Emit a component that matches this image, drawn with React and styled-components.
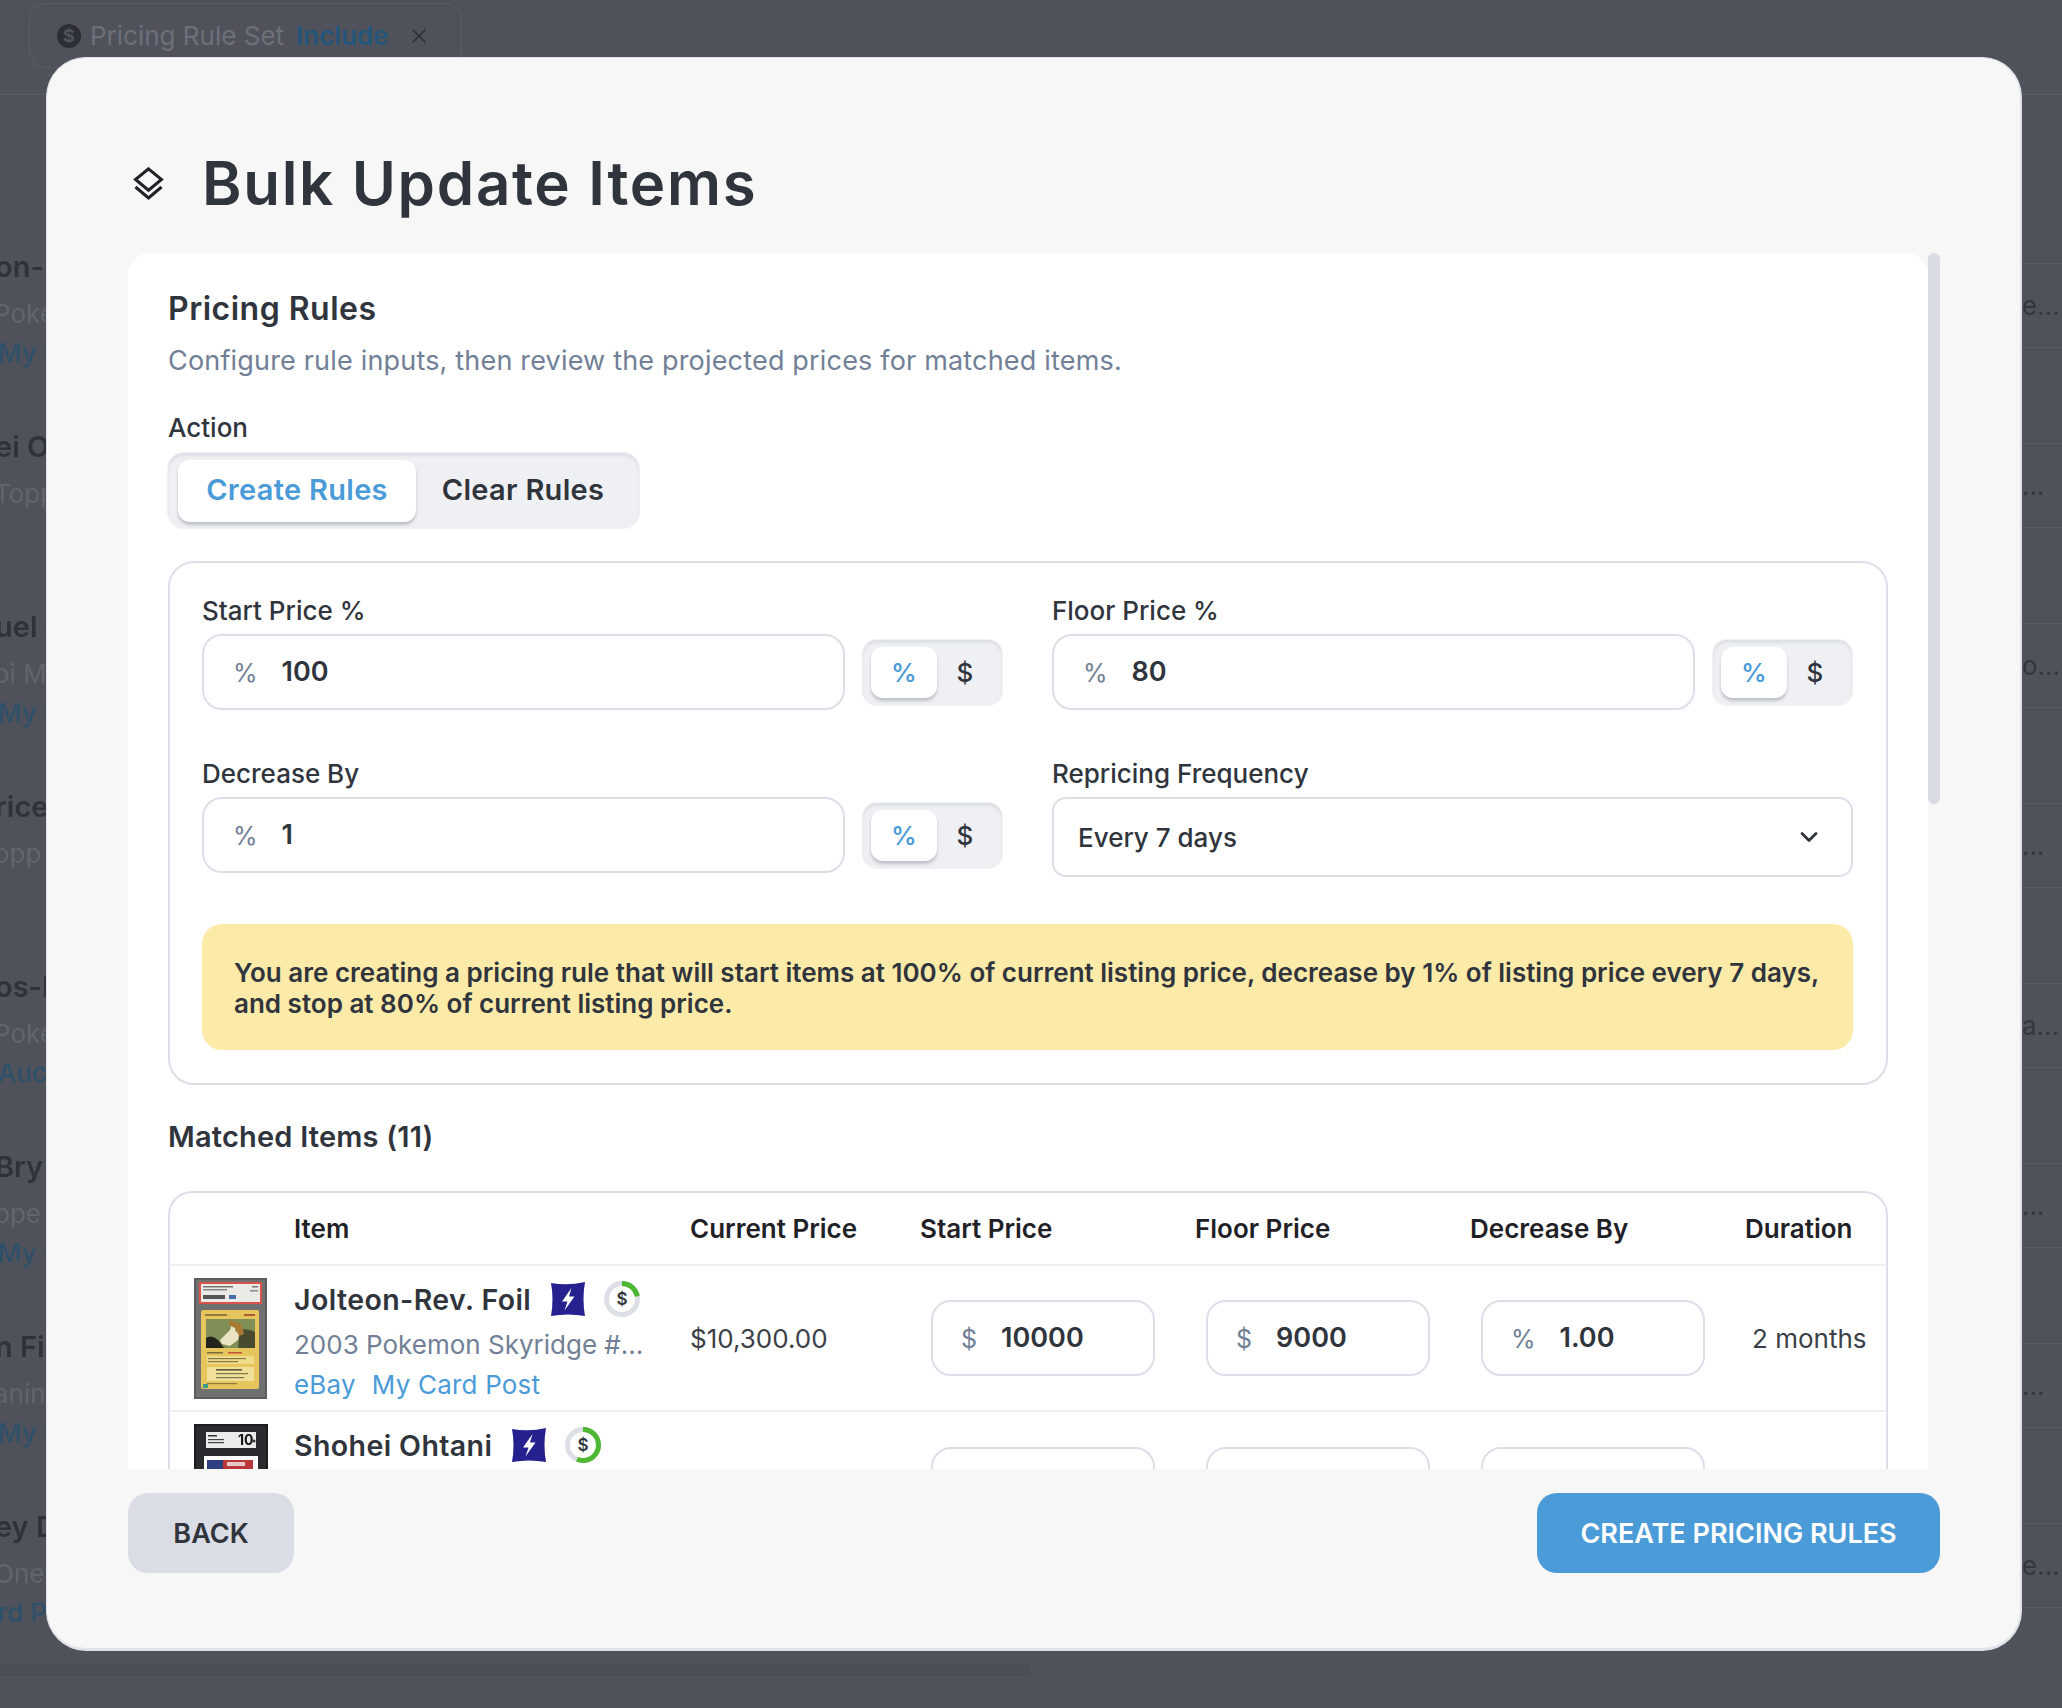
import React from "react";
import styled, { createGlobalStyle } from "styled-components";
import { ChevronDown, X } from "lucide-react";

const GlobalStyle = createGlobalStyle`
    html, body {
        margin: 0;
        padding: 0;
        background: #4f525b;
        font-family: "Inter", "Liberation Sans", sans-serif;
    }
    * {
        box-sizing: border-box;
    }
`

const Page = styled.div`
    position: relative;
    width: 2062px;
    height: 1708px;
    background: #4f525b;
    overflow: hidden;
`

const Backdrop = styled.div`
    display: flex;
    flex-direction: column;
    height: 100%;
`

const TopBar = styled.div`
    height: 95px;
    padding: 3px 0 0 29px;
    border-bottom: 1px solid #5a5d65;
    flex-shrink: 0;
`

const FilterChip = styled.div`
    display: inline-flex;
    align-items: center;
    width: 433px;
    height: 65px;
    padding: 0 0 0 27px;
    border: 1px solid #5a5d65;
    border-radius: 16px;
    font-size: 26px;
    color: #6d7078;
`

const ChipDollar = styled.span`
    display: flex;
    align-items: center;
    justify-content: center;
    width: 24px;
    height: 24px;
    margin-right: 9px;
    border-radius: 50%;
    background: #2b2e36;
    color: #4f525b;
    font-size: 18px;
    font-weight: 700;
`

const ChipAccent = styled.span`
    margin: 0 18px 0 12px;
    color: #24557a;
    font-weight: 600;
`

const BackRows = styled.div`
    margin-top: 128px;
    filter: blur(0.5px);
`

const BackRow = styled.div`
    display: flex;
    justify-content: space-between;
    height: 180px;
`

const BackLeft = styled.div`
    width: 46px;
    overflow: hidden;
    white-space: nowrap;
    padding-top: 26px;
`

const BackName = styled.div`
    height: 36px;
    margin-left: -5px;
    font-size: 29px;
    font-weight: 600;
    color: #2f323a;
`

const BackSub = styled.div`
    height: 42px;
    margin: 8px 0 0 -6px;
    line-height: 42px;
    font-size: 26px;
    color: #62656d;
`

const BackLink = styled.div`
    height: 36px;
    margin-left: -2px;
    line-height: 36px;
    font-size: 26px;
    font-weight: 500;
    color: #2e5068;
`

const BackRight = styled.div`
    display: flex;
    align-items: center;
    width: 40px;
    height: 85px;
    margin-top: 40px;
    border-top: 1px solid #5a5d65;
    border-bottom: 1px solid #5a5d65;
    font-size: 26px;
    color: #33363e;
`

const BackFooter = styled.div`
    width: 1030px;
    height: 12px;
    background: #4b4e57;
    border-bottom: 1px solid #474a52;
`

const Modal = styled.div`
    position: absolute;
    left: 46px;
    top: 57px;
    width: 1976px;
    height: 1594px;
    display: flex;
    flex-direction: column;
    padding: 89px 80px 0 81px;
    background: #f7f7f7;
    border: 2px solid #dfe2e8;
    border-width: 1px 2px 3px 1px;
    border-radius: 40px;
`

const ModalHeader = styled.div`
    display: flex;
    align-items: center;
    gap: 38px;
    height: 72px;
    margin: 0 0 34px 5px;
    flex-shrink: 0;
`

const ModalTitle = styled.h1`
    margin: 0;
    font-size: 60px;
    font-weight: 600;
    letter-spacing: 1.7px;
    color: #30343c;
`

const ScrollArea = styled.div`
    position: relative;
    height: 1216px;
    flex-shrink: 0;
`

const Card = styled.div`
    width: 1800px;
    height: 100%;
    padding: 34px 40px 0;
    overflow: hidden;
    background: #fff;
    border-radius: 22px 22px 0 0;
`

const ScrollThumb = styled.div`
    position: absolute;
    top: 0;
    right: 0;
    width: 12px;
    height: 551px;
    border-radius: 6px;
    background: #d9dce3;
`

const SectionTitle = styled.h2`
    margin: 0;
    height: 44px;
    line-height: 44px;
    font-size: 32px;
    font-weight: 600;
    letter-spacing: 0.5px;
    color: #30343c;
`

const SectionNote = styled.p`
    margin: 8px 0 0;
    height: 44px;
    line-height: 44px;
    font-size: 27px;
    letter-spacing: 0.18px;
    color: #718096;
`

const FieldLabel = styled.div`
    height: 30px;
    line-height: 30px;
    font-size: 26px;
    font-weight: 500;
    color: #30343c;
`

const ActionLabel = styled(FieldLabel)`
    margin-top: 30px;
`

const Segmented = styled.div`
    display: flex;
    align-items: center;
    width: ${(p) => (p.$small ? "139px" : "471px")};
    height: ${(p) => (p.$small ? "65px" : "75px")};
    margin-top: ${(p) => (p.$small ? "0" : "10px")};
    padding: ${(p) => (p.$small ? "0 8px" : "0 10px")};
    background: #eff0f3;
    border-radius: ${(p) => (p.$small ? "14px" : "16px")};
    box-shadow: inset 0 3px 3px #dcdfe5, 0 0 0 1px #f1f2f4;
    flex-shrink: 0;
`

const SegmentButton = styled.div`
    display: flex;
    align-items: center;
    justify-content: center;
    flex-shrink: 0;
    height: ${(p) => (p.$small ? "51px" : "62px")};
    width: ${(p) => (p.$small ? (p.$active ? "66px" : "56px") : p.$active ? "238px" : "214px")};
    padding-bottom: ${(p) => (p.$small ? "0" : "2px")};
    background: ${(p) => (p.$active ? "#fff" : "transparent")};
    border-radius: 12px;
    box-shadow: ${(p) => (p.$active ? "0 3px 3px rgba(120, 125, 145, 0.4)" : "none")};
    color: ${(p) => (p.$active ? "#4a9bd8" : "#30343c")};
    font-size: ${(p) => (p.$small ? "26px" : "29px")};
    font-weight: ${(p) => (p.$small ? 500 : 600)};
    letter-spacing: ${(p) => (p.$small ? "0" : "0.3px")};
`

const RulesBox = styled.div`
    margin-top: 33px;
    height: 524px;
    padding: 33px 33px 0 32px;
    border: 2px solid #dcdfe7;
    border-radius: 26px;
`

const FieldGrid = styled.div`
    display: grid;
    grid-template-columns: 801px 801px;
    column-gap: 49px;
    row-gap: 51px;
`

const FieldCell = styled.div`
    display: flex;
    flex-direction: column;
    gap: 8px;
    height: 112px;
`

const FieldRow = styled.div`
    display: flex;
    align-items: center;
    gap: 18px;
`

const PriceInput = styled.div`
    display: flex;
    align-items: center;
    width: ${(p) => (p.$compact ? "224px" : "643px")};
    height: 76px;
    padding-left: ${(p) => (p.$compact ? "28px" : "29px")};
    background: #fff;
    border: 2px solid #dcdfe7;
    border-radius: 20px;
    flex-shrink: 0;
`

const InputPrefix = styled.span`
    margin: 2px 24px 0 0;
    font-size: 25px;
    color: #718096;
`

const InputValue = styled.span`
    margin-top: -2px;
    font-size: 27px;
    font-weight: 600;
    color: #30343c;
`

const SelectBox = styled.div`
    display: flex;
    align-items: center;
    justify-content: space-between;
    flex-shrink: 0;
    height: 80px;
    padding: 0 28px 0 24px;
    border: 2px solid #dcdfe7;
    border-radius: 14px;
    font-size: 26px;
    font-weight: 500;
    color: #30343c;
`

const SummaryNote = styled.div`
    height: 126px;
    margin-top: 53px;
    padding: 33px 32px 0;
    background: #fbeaa8;
    border-radius: 20px;
    font-size: 26px;
    font-weight: 600;
    line-height: 31px;
    color: #30343c;
`

const MatchedTitle = styled(SectionTitle)`
    margin-top: 30px;
    font-size: 29px;
    letter-spacing: 0.2px;
`

const ItemsTable = styled.div`
    margin-top: 32px;
    border: 2px solid #dcdfe7;
    border-bottom: none;
    border-radius: 24px 24px 0 0;
    overflow: hidden;
`

const gridColumns = "124px 396px 230px 275px 275px 275px 1fr"

const HeadRow = styled.div`
    display: grid;
    grid-template-columns: ${gridColumns};
    align-items: center;
    height: 71px;
    font-size: 26px;
    font-weight: 600;
    color: #1f2127;
`

const ItemRow = styled.div`
    display: grid;
    grid-template-columns: ${gridColumns};
    align-items: center;
    height: 146px;
    border-top: 2px solid #eff0f2;
    font-size: 26px;
    color: #3b3f48;
`

const Thumb = styled.div`
    align-self: start;
    padding: 12px 0 0 24px;
    line-height: 0;
    filter: blur(0.4px);
`

const ItemCell = styled.div`
    align-self: start;
    padding-top: 15px;
    white-space: nowrap;
`

const ItemTitleRow = styled.div`
    display: flex;
    align-items: center;
    height: 36px;
`

const ItemName = styled.span`
    margin-right: 20px;
    font-size: 28.5px;
    font-weight: 600;
    letter-spacing: 0.4px;
    color: #30343c;
`

const RatingRing = styled.svg`
    margin-left: 19px;
`

const ItemSub = styled.div`
    margin-top: 12px;
    height: 32px;
    line-height: 32px;
    font-size: 26px;
    color: #718096;
`

const ItemLinks = styled.div`
    display: flex;
    gap: 16px;
    margin-top: 8px;
    height: 32px;
    line-height: 32px;
    font-size: 26px;
    letter-spacing: 0.2px;
    color: #4a9bd8;
`

const InputCell = styled.div`
    align-self: ${(p) => (p.$cut ? "start" : "center")};
    padding-left: 11px;
    padding-top: ${(p) => (p.$cut ? "35px" : "0")};
`

const Duration = styled.div`
    padding-left: 7px;
    white-space: nowrap;
`

const ModalFooter = styled.div`
    display: flex;
    justify-content: space-between;
    padding-top: 24px;
`

const FooterButton = styled.button`
    height: 80px;
    padding: 0;
    width: ${(p) => (p.$primary ? "403px" : "166px")};
    border: none;
    border-radius: 20px;
    background: ${(p) => (p.$primary ? "#4a9bd8" : "#dadde5")};
    color: ${(p) => (p.$primary ? "#fff" : "#30343c")};
    font-family: inherit;
    font-size: 27px;
    font-weight: 600;
`

const LayersIcon = () => (
    <svg width="31" height="33" viewBox="0 0 31 33" fill="none" stroke="#1f2127" strokeWidth="3">
        <path d="M15.5 1.8 L28.5 12.5 L15.5 23.2 L2.5 12.5 Z" />
        <path d="M2.5 20 L15.5 31 L28.5 20" />
    </svg>
)

const BoltBadge = () => (
    <svg width="34" height="34" viewBox="0 0 34 34">
        <path d="M0 1 Q17 4 34 0 Q31 17 34 34 Q17 31 0 34 Q3 17 0 1 Z" fill="#25218f" />
        <path d="M20.5 6 L11 19.5 H16.5 L13.5 28.5 L23.5 14.5 H18 Z" fill="#fff" />
    </svg>
)

const Ring = ({ percent }) => {
    const length = 2 * Math.PI * 15.5
    return (
        <RatingRing width="36" height="36" viewBox="0 0 36 36">
            <circle cx="18" cy="18" r="15.5" fill="none" stroke="#dcdfe6" strokeWidth="5" />
            <circle
                cx="18"
                cy="18"
                r="15.5"
                fill="none"
                stroke="#4cb733"
                strokeWidth="5"
                strokeDasharray={`${(length * percent) / 100} ${length}`}
                transform="rotate(-90 18 18)"
            />
            <text x="18" y="24" textAnchor="middle" fontFamily="Inter, sans-serif" fontSize="17" fontWeight="600" fill="#30343c">$</text>
        </RatingRing>
    )
}

const PsaSlab = () => (
    <svg width="73" height="121" viewBox="0 0 73 121">
        <rect width="73" height="121" fill="#5c5c5c" />
        <rect x="2" y="2" width="69" height="117" fill="#707070" />
        <rect x="5" y="4" width="63" height="22" fill="#d9534c" />
        <rect x="7" y="6" width="59" height="18" fill="#eceae6" />
        <rect x="9" y="8" width="30" height="1.5" fill="#777" />
        <rect x="9" y="11" width="24" height="1.5" fill="#888" />
        <rect x="58" y="8" width="6" height="1.5" fill="#777" />
        <rect x="56" y="12" width="8" height="1.5" fill="#888" />
        <rect x="9" y="17" width="22" height="4" fill="#555" />
        <rect x="35" y="17" width="7" height="4" fill="#4a6fa8" />
        <rect x="7" y="32" width="58" height="79" rx="2" fill="#e6c65c" />
        <rect x="11" y="36" width="22" height="2" fill="#8f7c3c" />
        <rect x="50" y="36" width="11" height="2" fill="#a85a3a" />
        <rect x="12" y="41" width="49" height="29" fill="#7f8f55" />
        <path d="M12 70 V60 Q18 56 24 62 L30 70 Z" fill="#23231c" />
        <path d="M44 70 L46 52 Q54 50 61 54 V70 Z" fill="#4a4a30" />
        <path d="M26 62 L36 52 L38 45 L42 47 L41 54 L46 52 L44 62 L36 68 L28 66 Z" fill="#ece2c4" />
        <path d="M36 42 L47 46 L50 56 L45 58 L41 50 L35 47 Z" fill="#a87a34" />
        <rect x="13" y="74" width="16" height="1.5" fill="#7a6b3a" />
        <rect x="34" y="74" width="14" height="1.5" fill="#c4523a" />
        <rect x="13" y="78" width="47" height="8" fill="#efdc8a" />
        <rect x="14" y="80" width="38" height="1.2" fill="#857748" />
        <rect x="14" y="83" width="30" height="1.2" fill="#857748" />
        <rect x="13" y="89" width="47" height="14" fill="#f1e097" />
        <rect x="22" y="91" width="26" height="1.6" fill="#5f5840" />
        <rect x="22" y="95" width="32" height="1.2" fill="#7f7550" />
        <rect x="22" y="99" width="28" height="1.2" fill="#7f7550" />
        <rect x="13" y="105" width="30" height="1.2" fill="#8c7a3f" />
        <rect x="9" y="106" width="5" height="4" fill="#3f9a8a" />
    </svg>
)

const SgcSlab = () => (
    <svg width="74" height="130" viewBox="0 0 74 130">
        <rect width="74" height="130" fill="#1c1d1f" />
        <rect x="2" y="2" width="70" height="126" fill="#2a2b2e" />
        <rect x="12" y="8" width="50" height="16" fill="#ebebeb" />
        <rect x="14" y="11" width="9" height="1.5" fill="#333" />
        <rect x="14" y="15" width="16" height="1.2" fill="#444" />
        <rect x="14" y="18" width="16" height="1.2" fill="#444" />
        <text x="44" y="21" fontFamily="Inter, sans-serif" fontSize="14" fontWeight="700" fill="#111">10</text>
        <circle cx="60" cy="17" r="1.5" fill="#333" />
        <rect x="10" y="32" width="54" height="90" fill="#fff" />
        <rect x="13" y="36" width="46" height="70" fill="#b9363a" />
        <rect x="13" y="36" width="16" height="14" fill="#2d3f80" />
        <rect x="33" y="38" width="18" height="4" fill="#e6c8c8" />
    </svg>
)

const backRows = [
    { name: "on-R", sub: "Poke", link: "My C", right: "e..." },
    { name: "ei Ol", sub: "Topp", right: "..." },
    { name: "uel J", sub: "oi M", link: "My C", right: "o..." },
    { name: "rice", sub: "opp", right: "..." },
    { name: "os-R", sub: "Poke", link: "Auct", right: "a..." },
    { name: "Bry", sub: "ppe", link: "My C", right: "..." },
    { name: "n Fie", sub: "anin", link: "My C", right: "..." },
    { name: "ey D", sub: "One", link: "rd P", right: "e..." },
]

const BackdropPage = () => (
    <Backdrop>
        <TopBar>
            <FilterChip>
                <ChipDollar>$</ChipDollar>
                Pricing Rule Set
                <ChipAccent>Include</ChipAccent>
                <X size={24} color="#2b2e36" strokeWidth={1.6} />
            </FilterChip>
        </TopBar>
        <BackRows>
            {backRows.map((row) => (
                <BackRow key={row.name}>
                    <BackLeft>
                        <BackName>{row.name}</BackName>
                        <BackSub>{row.sub}</BackSub>
                        {row.link && <BackLink>{row.link}</BackLink>}
                    </BackLeft>
                    <BackRight>{row.right}</BackRight>
                </BackRow>
            ))}
        </BackRows>
        <BackFooter />
    </Backdrop>
)

const UnitToggle = () => (
    <Segmented $small>
        <SegmentButton $small $active>%</SegmentButton>
        <SegmentButton $small>$</SegmentButton>
    </Segmented>
)

const RuleField = ({ label, value }) => (
    <FieldCell>
        <FieldLabel>{label}</FieldLabel>
        <FieldRow>
            <PriceInput>
                <InputPrefix>%</InputPrefix>
                <InputValue>{value}</InputValue>
            </PriceInput>
            <UnitToggle />
        </FieldRow>
    </FieldCell>
)

const RowInput = ({ prefix, value, cut }) => (
    <InputCell $cut={cut}>
        <PriceInput $compact>
            <InputPrefix>{prefix}</InputPrefix>
            <InputValue>{value}</InputValue>
        </PriceInput>
    </InputCell>
)

const App = () => {
    return (
        <Page>
            <GlobalStyle />
            <BackdropPage />
            <Modal>
                <ModalHeader>
                    <LayersIcon />
                    <ModalTitle>Bulk Update Items</ModalTitle>
                </ModalHeader>
                <ScrollArea>
                    <Card>
                        <SectionTitle>Pricing Rules</SectionTitle>
                        <SectionNote>Configure rule inputs, then review the projected prices for matched items.</SectionNote>
                        <ActionLabel>Action</ActionLabel>
                        <Segmented>
                            <SegmentButton $active>Create Rules</SegmentButton>
                            <SegmentButton>Clear Rules</SegmentButton>
                        </Segmented>
                        <RulesBox>
                            <FieldGrid>
                                <RuleField label="Start Price %" value="100" />
                                <RuleField label="Floor Price %" value="80" />
                                <RuleField label="Decrease By" value="1" />
                                <FieldCell>
                                    <FieldLabel>Repricing Frequency</FieldLabel>
                                    <SelectBox>
                                        Every 7 days
                                        <ChevronDown size={28} color="#30343c" strokeWidth={2.4} />
                                    </SelectBox>
                                </FieldCell>
                            </FieldGrid>
                            <SummaryNote>
                                You are creating a pricing rule that will start items at 100% of current listing price, decrease by 1% of listing price every 7 days,
                                <br />
                                and stop at 80% of current listing price.
                            </SummaryNote>
                        </RulesBox>
                        <MatchedTitle>Matched Items (11)</MatchedTitle>
                        <ItemsTable>
                            <HeadRow>
                                <span />
                                <span>Item</span>
                                <span>Current Price</span>
                                <span>Start Price</span>
                                <span>Floor Price</span>
                                <span>Decrease By</span>
                                <span>Duration</span>
                            </HeadRow>
                            <ItemRow>
                                <Thumb><PsaSlab /></Thumb>
                                <ItemCell>
                                    <ItemTitleRow>
                                        <ItemName>Jolteon-Rev. Foil</ItemName>
                                        <BoltBadge />
                                        <Ring percent={22} />
                                    </ItemTitleRow>
                                    <ItemSub>2003 Pokemon Skyridge #...</ItemSub>
                                    <ItemLinks>
                                        <span>eBay</span>
                                        <span>My Card Post</span>
                                    </ItemLinks>
                                </ItemCell>
                                <div>$10,300.00</div>
                                <RowInput prefix="$" value="10000" />
                                <RowInput prefix="$" value="9000" />
                                <RowInput prefix="%" value="1.00" />
                                <Duration>2 months</Duration>
                            </ItemRow>
                            <ItemRow>
                                <Thumb><SgcSlab /></Thumb>
                                <ItemCell>
                                    <ItemTitleRow>
                                        <ItemName>Shohei Ohtani</ItemName>
                                        <BoltBadge />
                                        <Ring percent={56} />
                                    </ItemTitleRow>
                                </ItemCell>
                                <div />
                                <RowInput cut />
                                <RowInput cut />
                                <RowInput cut />
                                <div />
                            </ItemRow>
                        </ItemsTable>
                    </Card>
                    <ScrollThumb />
                </ScrollArea>
                <ModalFooter>
                    <FooterButton>BACK</FooterButton>
                    <FooterButton $primary>CREATE PRICING RULES</FooterButton>
                </ModalFooter>
            </Modal>
        </Page>
    )
}

export default App;
